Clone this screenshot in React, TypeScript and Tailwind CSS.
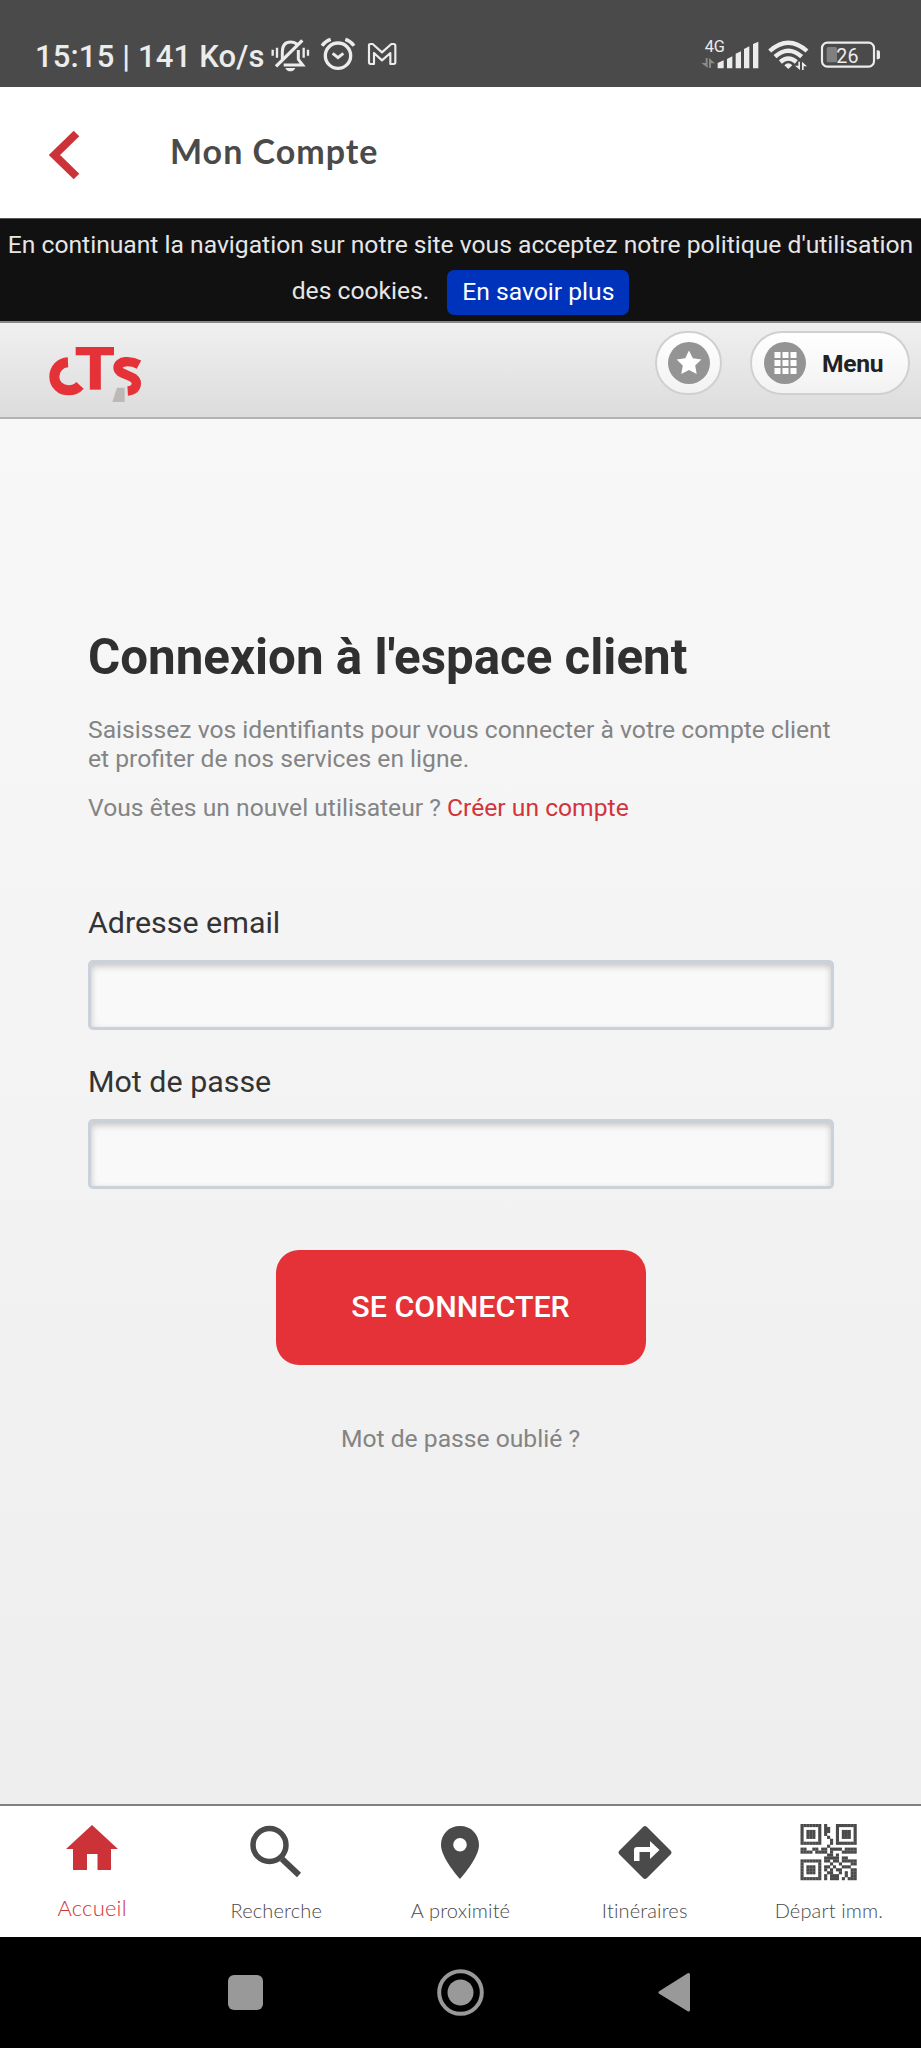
import type { ReactNode } from "react";

const QR_ROWS = [
  "1111111.1...1111111",
  "1.....1.11..1.....1",
  "1.111.1.11..1.111.1",
  "1.111.1.1...1.111.1",
  "1.111.1..1..1.111.1",
  "1.....1...1.1.....1",
  "1111111...1.1111111",
  ".........1.........",
  "11..11.11.1111.1111",
  "1111.1111.1...11111",
  ".........11.1......",
  "........11111.11...",
  "1111111.11.11.11111",
  "1.....1...1..1...11",
  "1.111.1.11.1..111..",
  "1.111.1.1.1.11...11",
  "1.111.1..11..1.1.11",
  "1.....1.1.111..1.11",
  "1111111.1.111.1.111",
];

function StatusBar() {
  return (
    <div className="flex h-[87px] w-full shrink-0 bg-[#4a4a4a] text-[#ececec]">
      <span className="ml-[35px] w-[236px] whitespace-pre pt-[38px] text-[31px] leading-[38px] font-medium tracking-[0.150px]">15:15 | 141 Ko/s</span>
      <svg className="h-[87px] w-[40px] shrink-0" viewBox="812 0 120 261" fill="none" stroke="currentColor" strokeWidth="9">
        <path d="M846 178V156C846 136 856 126 871 126C879 126 886 129 891 134M894 150V178L907 195H850" />
        <path d="M827 199L906 121" strokeWidth="10" />
        <path d="M817 149V167M830 143V173M910 143V173M923 149V167" strokeWidth="7" />
        <path d="M855 204H885C882 211 877 214 870 214C863 214 858 211 855 204Z" fill="currentColor" stroke="none" />
      </svg>
      <svg className="ml-[9px] h-[87px] w-[36px] shrink-0" viewBox="960 0 108 261" fill="none" stroke="currentColor" strokeWidth="10">
        <circle cx="1014" cy="167" r="38" />
        <path d="M966 137Q976 123 992 118M1062 137Q1052 123 1036 118" />
        <path d="M998 160L1014 173L1030 160" strokeWidth="9" />
      </svg>
      <svg className="ml-[10px] h-[87px] w-[32px] shrink-0" viewBox="1098 0 96 261" fill="none" stroke="currentColor" strokeWidth="6.500" strokeLinejoin="round">
        <path d="M1107 136Q1107 132 1112 132H1118L1146 157L1174 132H1181Q1186 132 1186 137V187Q1186 192 1181 192H1171V159L1146 181L1122 159V192H1112Q1107 192 1107 187Z" />
      </svg>
      <svg className="ml-auto h-[87px] w-[60px] shrink-0" viewBox="122 0 180 261" fill="currentColor">
        <text x="136" y="156" fontSize="49" className="font-[Roboto]">4G</text>
        <path d="M175 205V189L193 181V205ZM203 205V177L219 169V205ZM229 205V161L245 154V205ZM254 205V147L270 139V205ZM281 205V132L297 125V205Z" />
        <path d="M139 174H145V204L126 189H139ZM149 204V174L167 190H155V204Z" opacity=".4" />
      </svg>
      <svg className="ml-[7px] h-[87px] w-[42px] shrink-0" viewBox="325 0 126 261" fill="none" stroke="currentColor" strokeWidth="13">
        <path d="M333 153Q389 103 445 153" />
        <path d="M349 170Q389 134 429 170" />
        <path d="M365 186Q389 165 413 186" />
        <path d="M377 196Q389 183 401 196L389 207Z" fill="currentColor" stroke="none" />
        <path d="M419 185H424V210L409 197H419ZM430 210V185L445 199H435V210Z" fill="currentColor" stroke="none" />
      </svg>
      <svg className="mr-[40px] ml-[11px] h-[87px] w-[61px] shrink-0" viewBox="482 0 183 261" fill="none" stroke="currentColor">
        <rect x="488" y="128" width="156" height="72" rx="16" strokeWidth="6.500" />
        <rect x="502" y="141" width="31" height="46" rx="5" fill="#808080" stroke="none" />
        <path d="M652 151H656Q662 151 662 157V172Q662 178 656 178H652Z" fill="currentColor" stroke="none" />
        <text x="531" y="188" fontSize="59" fill="currentColor" stroke="none" className="font-[Roboto]">26</text>
      </svg>
    </div>
  );
}

function Header() {
  return (
    <header className="flex h-[131px] shrink-0 items-center bg-white">
      <svg className="mt-[5px] ml-[48px] h-[52px] w-[34px]" viewBox="0 0 34 52" fill="none" stroke="#cc3339" strokeWidth="8">
        <path d="M28.500 4.500L6.500 26L28.500 47.500" />
      </svg>
      <h1 className="-mt-[3px] ml-[88px] whitespace-nowrap font-[Lato] text-[34px] leading-[40px] font-bold tracking-[1px] text-[#4a4a4a]">Mon Compte</h1>
    </header>
  );
}

function CookieBanner() {
  return (
    <div className="h-[105px] shrink-0 border-t border-b-2 border-t-[#555] border-b-[#888] bg-[#111] text-center text-[24.670px] text-[#e6e6e6]">
      <p className="mt-[4px] whitespace-nowrap leading-[43px]">En continuant la navigation sur notre site vous acceptez notre politique d'utilisation</p>
      <div className="mt-[4px] flex items-center justify-center gap-[18px]">
        <span className="-mt-[3px] leading-[42px]">des cookies.</span>
        <a className="flex h-[45px] w-[182px] items-center justify-center rounded-[7px] bg-[#0033bb] pb-[3px] text-white">En savoir plus</a>
      </div>
    </div>
  );
}

function Toolbar() {
  return (
    <div className="flex h-[96px] shrink-0 items-start border-b-2 border-[#b2b2b2] bg-linear-to-b from-[#f0f0f0] to-[#dcdcdc]">
      <svg className="mt-[22px] ml-[47px] h-[60px] w-[97px]" viewBox="21 45 291 180" fill="none" stroke="#e53238" strokeWidth="30">
        <path d="M84 97C60 98 43 117 43 140C43 164 62 181 86 181C101 181 112 175 120 166" />
        <path d="M107 63.500H222" strokeWidth="25" />
        <path d="M166 63V179" strokeWidth="33" />
        <path d="M297 104C271 90 235 92 234 112C233 138 289 132 289 160C289 174 280 182 263 183" strokeWidth="28" />
        <path d="M231 173H254V216H217Z" fill="#bdb9b7" stroke="none" />
      </svg>
      <button className="mt-[8px] ml-auto flex h-[64px] w-[67px] items-center justify-center rounded-full border-2 border-[#d0d0d0] bg-linear-to-b from-white to-[#f2f2f2]">
        <svg className="h-[42px] w-[42px]" viewBox="0 0 42 42">
          <circle cx="21" cy="21" r="21" fill="#949494" />
          <path d="M21 8.500L24.800 16.200L33.400 17.400L27.200 23.400L28.700 32L21 28L13.300 32L14.800 23.400L8.600 17.400L17.200 16.200Z" fill="#fff" />
        </svg>
      </button>
      <button className="mt-[8px] mr-[11px] ml-[28px] flex h-[64px] w-[160px] items-center rounded-full border-2 border-[#d0d0d0] bg-linear-to-b from-white to-[#f2f2f2] pl-[12px]">
        <svg className="h-[42px] w-[42px]" viewBox="0 0 42 42">
          <circle cx="21" cy="21" r="21" fill="#949494" />
          <path d="M10.500 10h6v6h-6zM18.500 10h6v6h-6zM26.500 10h6v6h-6zM10.500 18h6v6h-6zM18.500 18h6v6h-6zM26.500 18h6v6h-6zM10.500 26h6v6h-6zM18.500 26h6v6h-6zM26.500 26h6v6h-6z" fill="#fff" />
        </svg>
        <span className="mt-[2px] ml-[16px] text-[24.600px] font-bold tracking-[-0.300px] text-[#222]">Menu</span>
      </button>
    </div>
  );
}

function Field({ label, type }: { label: string; type: string }) {
  return (
    <label className="block">
      <span className="block text-[30.400px] leading-[36px] text-[#333]">{label}</span>
      <input type={type} className="mt-[19px] block h-[70px] w-full rounded-[5px] border-[3px] border-[#cbd1d9] bg-[#f9f9f9] shadow-[inset_0_3px_7px_rgba(0,0,0,0.22)] outline-none" />
    </label>
  );
}

function LoginForm() {
  return (
    <main className="flex grow flex-col bg-linear-to-b from-[#f8f8f8] to-[#eeeeee] px-[88px] pt-[210px] text-[24.670px] leading-[29px] text-[#848484]">
      <h2 className="whitespace-nowrap text-[49.300px] leading-[56px] font-bold text-[#303030]">Connexion à l'espace client</h2>
      <p className="mt-[30px] whitespace-nowrap">
        Saisissez vos identifiants pour vous connecter à votre compte client
        <br />
        et profiter de nos services en ligne.
      </p>
      <p className="mt-[20px] whitespace-nowrap">
        Vous êtes un nouvel utilisateur ? <a className="text-[#d3333a]">Créer un compte</a>
      </p>
      <div className="mt-[83px] flex w-[746px] flex-col gap-[34px]">
        <Field label="Adresse email" type="email" />
        <Field label="Mot de passe" type="password" />
      </div>
      <button className="mt-[61px] flex h-[115px] w-[370px] items-center justify-center self-center rounded-[23px] bg-[#e53238] pb-[2px] text-[30.400px] font-medium text-white">SE CONNECTER</button>
      <a className="mt-[59px] self-center">Mot de passe oublié ?</a>
    </main>
  );
}

function Tab({ label, active, children }: { label: string; active?: boolean; children: ReactNode }) {
  return (
    <a className={active ? "flex flex-col items-center text-[#cc3339]" : "flex flex-col items-center text-[#4a4a4a]"}>
      <svg className="mt-[14px] h-[64px] w-[64px]" viewBox="0 0 64 64" fill="currentColor">{children}</svg>
      <span className={active ? "mt-[12px] text-[22px] leading-[24px] tracking-[0.200px]" : "mt-[14px] text-[20px] leading-[24px] tracking-[0.150px]"}>{label}</span>
    </a>
  );
}

function TabBar() {
  return (
    <nav className="grid h-[133px] shrink-0 grid-cols-5 border-t-2 border-[#808080] bg-white font-[Lato] font-light whitespace-nowrap">
      <Tab label="Accueil" active>
        <path d="M32 5L58 29H51V50H37.500V34H27V50H13V29H6Z" />
      </Tab>
      <Tab label="Recherche">
        <circle cx="25.500" cy="25" r="16.500" fill="none" stroke="currentColor" strokeWidth="5.500" />
        <path d="M38 39L55 55" stroke="currentColor" strokeWidth="6" />
      </Tab>
      <Tab label="A proximité">
        <path fillRule="evenodd" d="M32 6C21 6 13 14 13 25C13 38 32 59 32 59S51 38 51 25C51 14 43 6 32 6ZM32 18A6.800 6.800 0 1 1 32 31.600A6.800 6.800 0 1 1 32 18Z" />
      </Tab>
      <Tab label="Itinéraires">
        <path fillRule="evenodd" d="M30 7Q32 5 34 7L57.500 30.500Q59.500 32.500 57.500 34.500L34 58Q32 60 30 58L6.500 34.500Q4.500 32.500 6.500 30.500ZM21 41H26.500V32H37V39L46.500 30L37 21V27H24Q21 27 21 30Z" />
      </Tab>
      <Tab label="Départ imm.">
        <g transform="translate(3.500 4) scale(2.950)">
          {QR_ROWS.flatMap((row, y) => [...row].map((cell, x) => (cell === "1" ? <rect key={`${x}-${y}`} x={x} y={y} width="1.060" height="1.060" /> : null)))}
        </g>
      </Tab>
    </nav>
  );
}

function SystemNav() {
  return (
    <div className="flex h-[111px] shrink-0 items-start bg-black text-[#999]">
      <div className="mt-[38px] ml-[228px] h-[35px] w-[35px] rounded-[6px] bg-[#999]" />
      <svg className="mt-[32px] ml-[174px] h-[47px] w-[47px]" viewBox="0 0 47 47">
        <circle cx="23.500" cy="23.500" r="21.300" fill="none" stroke="currentColor" strokeWidth="4" />
        <circle cx="23.500" cy="23.500" r="13" fill="currentColor" />
      </svg>
      <svg className="mt-[35px] ml-[174px] h-[40px] w-[32px]" viewBox="0 0 32 40" fill="currentColor" stroke="currentColor" strokeWidth="3" strokeLinejoin="round">
        <path d="M2 20.500L30.500 2.500V38Z" />
      </svg>
    </div>
  );
}

export default function App() {
  return (
    <div className="flex h-[2048px] w-[921px] flex-col overflow-hidden bg-white font-[Roboto,sans-serif]">
      <StatusBar />
      <Header />
      <CookieBanner />
      <Toolbar />
      <LoginForm />
      <TabBar />
      <SystemNav />
    </div>
  );
}
